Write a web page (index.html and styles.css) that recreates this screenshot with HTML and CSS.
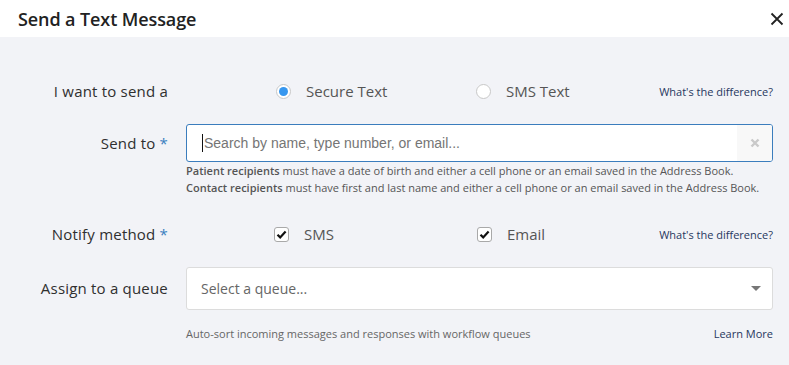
FILE: index.html
```html
<!DOCTYPE html>
<html lang="en">
<head>
    <meta charset="UTF-8">
    <title>Send a Text Message</title>
    <link rel="stylesheet" href="styles.css">
</head>
<body>
    <div class="modal">
        <div class="modal-header">
            <h1>Send a Text Message</h1>
            <button class="close-button" aria-label="Close">
                <svg width="14" height="14" viewBox="0 0 14 14">
                    <path d="M1.5 1.5 L12.5 12.5 M12.5 1.5 L1.5 12.5" stroke="#222" stroke-width="1.8" fill="none"/>
                </svg>
            </button>
        </div>

        <div class="modal-body">
            <div class="form-row">
                <div class="form-label">I want to send a</div>
                <div class="form-field options">
                    <label class="option">
                        <span class="radio checked"></span>
                        Secure Text
                    </label>
                    <label class="option">
                        <span class="radio"></span>
                        SMS Text
                    </label>
                    <a class="help-link" href="#">What's the difference?</a>
                </div>
            </div>

            <div class="form-row send-row">
                <div class="form-label tall">Send to <span class="required">*</span></div>
                <div class="form-field">
                    <div class="search-box">
                        <span class="caret"></span>
                        <span class="placeholder">Search by name, type number, or email...</span>
                        <span class="clear">
                            <svg width="10" height="10" viewBox="0 0 10 10">
                                <path d="M1.5 1.5 L8.5 8.5 M8.5 1.5 L1.5 8.5" stroke="#c9c9c9" stroke-width="2.4" fill="none"/>
                            </svg>
                        </span>
                    </div>
                    <p class="hint"><b>Patient recipients</b> must have a date of birth and either a cell phone or an email saved in the Address Book.</p>
                    <p class="hint"><b>Contact recipients</b> must have first and last name and either a cell phone or an email saved in the Address Book.</p>
                </div>
            </div>

            <div class="form-row notify-row">
                <div class="form-label">Notify method <span class="required">*</span></div>
                <div class="form-field options checks">
                    <label class="option">
                        <span class="checkbox">
                            <svg width="11" height="11" viewBox="0 0 11 11">
                                <path d="M1.5 5.8 L4.2 8.4 L9.6 2.6" stroke="#111" stroke-width="2.2" fill="none"/>
                            </svg>
                        </span>
                        SMS
                    </label>
                    <label class="option">
                        <span class="checkbox">
                            <svg width="11" height="11" viewBox="0 0 11 11">
                                <path d="M1.5 5.8 L4.2 8.4 L9.6 2.6" stroke="#111" stroke-width="2.2" fill="none"/>
                            </svg>
                        </span>
                        Email
                    </label>
                    <a class="help-link" href="#">What's the difference?</a>
                </div>
            </div>

            <div class="form-row queue-row">
                <div class="form-label select-label">Assign to a queue</div>
                <div class="form-field">
                    <div class="select-box">
                        <span>Select a queue...</span>
                        <span class="arrow"></span>
                    </div>
                    <div class="select-footer">
                        <span>Auto-sort incoming messages and responses with workflow queues</span>
                        <a class="help-link" href="#">Learn More</a>
                    </div>
                </div>
            </div>
        </div>
    </div>
</body>
</html>
```

FILE: styles.css
```css
body {
    margin: 0;
    font-family: 'Open Sans', sans-serif;
    background-color: #f2f3f7;
    color: #333;
}
.modal {
    width: 789px;
    height: 365px;
    background-color: #f2f3f7;
}
.modal-header {
    height: 37px;
    background-color: #fff;
    display: flex;
    align-items: center;
    justify-content: space-between;
    padding: 0 5px 0 18px;
    box-sizing: border-box;
}
h1 {
    margin: 0;
    font-size: 18px;
    font-weight: 600;
    color: #222;
    letter-spacing: -0.1px;
}
.close-button {
    border: none;
    background: none;
    padding: 0;
    width: 14px;
    height: 14px;
    cursor: pointer;
    display: flex;
}
.modal-body {
    padding: 43px 16px 0 0;
}
.form-row {
    display: grid;
    grid-template-columns: 168px 1fr;
    column-gap: 18px;
    align-items: start;
}
.form-label {
    text-align: right;
    font-size: 15px;
    font-weight: 500;
    letter-spacing: 0.2px;
    line-height: 22px;
    color: #2f2f2f;
}
.form-label.tall {
    line-height: 38px;
}
.form-label.select-label {
    line-height: 43px;
}
.required {
    color: #3a7fbf;
}
.options {
    display: flex;
    align-items: center;
    height: 22px;
    padding-left: 90px;
}
.option {
    flex-shrink: 0;
    display: flex;
    align-items: center;
    gap: 15px;
    font-size: 15px;
    color: #555;
    white-space: nowrap;
}
.option:first-child {
    width: 200px;
}
.checks {
    padding-left: 88px;
}
.checks .option:first-child {
    width: 203px;
}
.radio {
    width: 15px;
    height: 15px;
    border-radius: 50%;
    border: 1px solid #c8c8c8;
    background-color: #fff;
    box-sizing: border-box;
    display: flex;
    align-items: center;
    justify-content: center;
}
.radio.checked::after {
    content: "";
    width: 9px;
    height: 9px;
    border-radius: 50%;
    background-color: #3797ef;
}
.checkbox {
    width: 15px;
    height: 15px;
    border-radius: 3px;
    border: 1px solid #a9a9a9;
    background-color: #fff;
    box-sizing: border-box;
    display: flex;
    align-items: center;
    justify-content: center;
}
.help-link {
    margin-left: auto;
    font-size: 11px;
    color: #27375e;
    text-decoration: none;
    white-space: nowrap;
}
.send-row {
    margin-top: 22px;
}
.search-box {
    height: 38px;
    border: 1px solid #3b7dbd;
    border-radius: 3px;
    background-color: #fff;
    box-sizing: border-box;
    display: flex;
    align-items: center;
    padding-left: 15px;
}
.caret {
    width: 1px;
    height: 18px;
    background-color: #111;
    margin-right: 1px;
}
.placeholder {
    font-family: 'Liberation Sans', Arial, sans-serif;
    font-size: 14px;
    color: #757575;
    flex: 1;
}
.clear {
    width: 35px;
    height: 36px;
    background-color: #f8f8f8;
    display: flex;
    align-items: center;
    justify-content: center;
    border-radius: 0 2px 2px 0;
}
.hint {
    margin: 0;
    font-size: 11px;
    line-height: 17px;
    color: #555;
}
.hint b {
    font-weight: 600;
}
.notify-row {
    margin-top: 27px;
}
.queue-row {
    margin-top: 22px;
}
.select-box {
    height: 43px;
    border: 1px solid #dcdcdc;
    border-radius: 3px;
    background-color: #fff;
    box-sizing: border-box;
    display: flex;
    align-items: center;
    justify-content: space-between;
    padding: 0 11px 0 14px;
    font-size: 14px;
    color: #666;
}
.arrow {
    width: 0;
    height: 0;
    border-left: 5px solid transparent;
    border-right: 5px solid transparent;
    border-top: 5px solid #777;
}
.select-footer {
    margin-top: 15px;
    display: flex;
    align-items: center;
    font-size: 11px;
    line-height: 17px;
    color: #666;
}
```
